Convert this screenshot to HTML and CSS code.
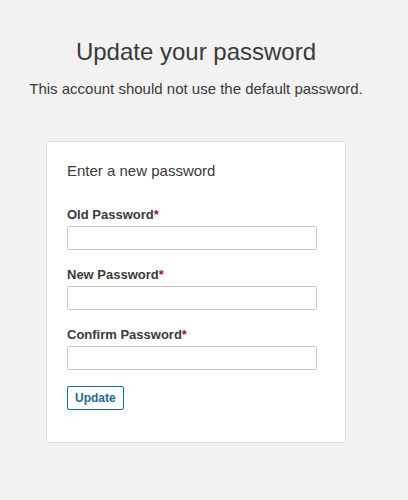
FILE: index.html
```html
<!DOCTYPE html>
<html>
<head>
<meta charset="utf-8">
<link rel="stylesheet" href="styles.css">
</head>
<body>
<div class="page">
  <h1 class="title">Update your password</h1>
  <p class="subtitle">This account should not use the default password.</p>
  <form class="card">
    <div class="card-heading">Enter a new password</div>
    <div class="field">
      <label class="label">Old Password<span class="req">*</span></label>
      <input class="input" type="password">
    </div>
    <div class="field">
      <label class="label">New Password<span class="req">*</span></label>
      <input class="input" type="password">
    </div>
    <div class="field">
      <label class="label">Confirm Password<span class="req">*</span></label>
      <input class="input" type="password">
    </div>
    <button class="btn" type="button">Update</button>
  </form>
</div>
</body>
</html>
```
FILE: styles.css
```css
html, body {
  margin: 0;
  padding: 0;
  background: #f2f2f2;
}
body {
  font-family: "Liberation Sans", Arial, sans-serif;
  color: #3a3a3a;
  height: 500px;
  overflow: hidden;
}
.page {
  width: 392px;
  display: flex;
  flex-direction: column;
  align-items: center;
  padding-top: 38px;
}
.title {
  margin: 0;
  font-size: 24px;
  font-weight: normal;
  line-height: 28px;
  color: #3a3a3a;
}
.subtitle {
  margin: 14px 0 0;
  font-size: 15px;
  line-height: 18px;
  color: #3a3a3a;
}
.card {
  box-sizing: border-box;
  width: 300px;
  height: 302px;
  margin-top: 43px;
  background: #fff;
  border: 1px solid #e0e0e0;
  border-radius: 3px;
  padding: 20px 20px;
  display: flex;
  flex-direction: column;
  align-items: flex-start;
}
.card-heading {
  font-size: 15px;
  line-height: 18px;
  color: #3a3a3a;
  margin-bottom: 27px;
}
.field {
  display: flex;
  flex-direction: column;
  width: 250px;
  margin-bottom: 17px;
}
.label {
  font-size: 13px;
  font-weight: bold;
  line-height: 16px;
  color: #3a3a3a;
  margin-bottom: 3px;
}
.req {
  color: #a0131c;
}
.input {
  box-sizing: border-box;
  width: 250px;
  height: 24px;
  margin: 0;
  border: 1px solid #c6c6c6;
  border-radius: 2px;
  background: #fff;
  padding: 2px 4px;
}
.btn {
  box-sizing: border-box;
  height: 24px;
  padding: 0 7px;
  margin-top: -1px;
  background: #fff;
  border: 1px solid #1d6a95;
  border-radius: 2px;
  color: #1d6a95;
  font-family: "Liberation Sans", Arial, sans-serif;
  font-size: 12px;
  font-weight: bold;
}
```
